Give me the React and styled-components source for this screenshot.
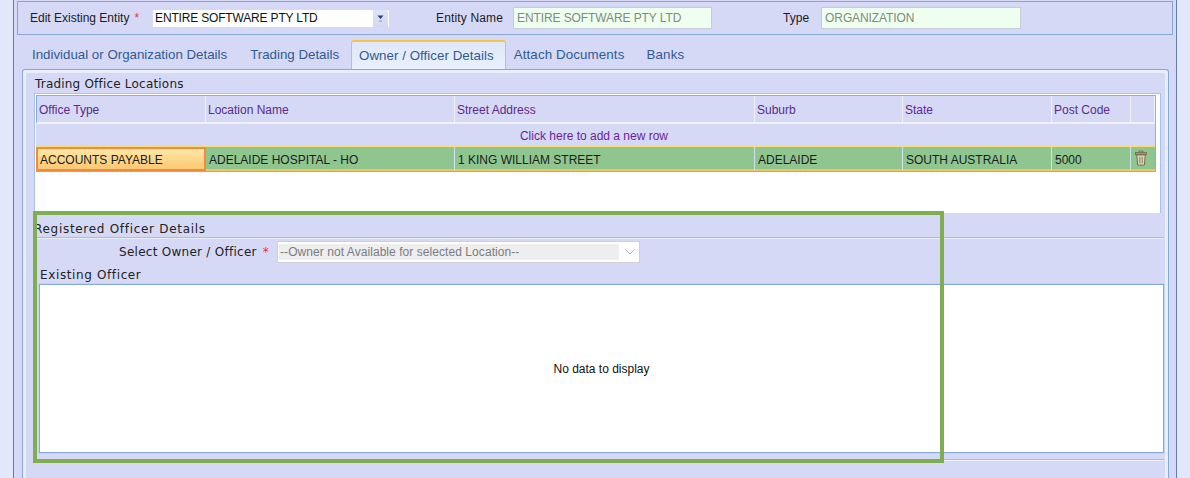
import React from "react";
import styled, { createGlobalStyle } from "styled-components";

const Global = createGlobalStyle`
  html, body { margin: 0; padding: 0; background: #e3e7fb; }
  body { width: 1190px; height: 478px; overflow: hidden; font-family: "Liberation Sans", Arial, sans-serif; }
`;

const Page = styled.div`
  position: relative;
  width: 1190px;
  height: 478px;
  overflow: hidden;
  padding: 0 13px;
  box-sizing: border-box;
`;
const Shell = styled.div`
  width: 1164px;
  height: 478px;
  box-sizing: border-box;
  background: #d6d9f6;
  border-left: 1px solid #5f7cac;
  border-right: 1px solid #5f7cac;
  padding: 1px 3px 0 3px;
`;
const TopPanel = styled.div`
  height: 34px;
  box-sizing: border-box;
  border: 1px solid #86a5d4;
  display: flex;
  align-items: center;
  padding-left: 12px;
  font-size: 12px;
  color: #1c1c1c;
`;
const FieldLabel = styled.label`
  margin-left: ${(p) => p.$ml || 0}px;
  white-space: nowrap;
  letter-spacing: ${(p) => p.$ls || 0}px;
`;
const Star = styled.span`
  color: #f03030;
  margin-left: 5px;
`;
const ComboBox = styled.div`
  margin-left: 14px;
  width: 236px;
  height: 17px;
  background: #fff;
  display: flex;
  align-items: center;
  padding-left: 2px;
  box-sizing: border-box;
  justify-content: space-between;
  color: #111;
  letter-spacing: -0.17px;
`;
const ComboArrow = styled.span`
  width: 16px;
  height: 17px;
  box-sizing: border-box;
  background: linear-gradient(#e2e5f8, #d2d7f1);
  border-right: 1px solid #fff;
  display: flex;
  align-items: center;
  justify-content: center;
`;
const ReadField = styled.div`
  margin-left: ${(p) => p.$ml}px;
  width: ${(p) => p.$w}px;
  height: 22px;
  box-sizing: border-box;
  border: 1px solid #c6ccd6;
  background: #efffef;
  color: #7f8a80;
  display: flex;
  align-items: center;
  padding-left: 3px;
  letter-spacing: -0.1px;
`;
const TabStrip = styled.div`
  height: 29px;
  margin-top: 5px;
  display: flex;
  padding-left: 5px;
  box-sizing: border-box;
`;
const Tab = styled.div`
  height: 29px;
  box-sizing: border-box;
  padding: 0 ${(p) => p.$pr}px 0 ${(p) => p.$pl}px;
  margin-left: ${(p) => p.$ml || 0}px;
  display: flex;
  align-items: center;
  font-size: 13.3px;
  letter-spacing: ${(p) => p.$ls || 0}px;
  color: #2f5a97;
  white-space: nowrap;
  ${(p) =>
    p.$active &&
    `background: linear-gradient(#dfe8f9, #e9f0fc);
     border: 1px solid #e8c050;
     border-top: 2px solid #f3c64a;
     border-bottom: none;
     border-radius: 3px 3px 0 0;`}
`;
const ContentPanel = styled.div`
  margin-left: 5px;
  width: 1147px;
  height: 420px;
  box-sizing: border-box;
  border: 1px solid #86a9dc;
  border-bottom: none;
  border-radius: 3px 3px 0 0;
  background: #d6d9f6;
  box-shadow: inset 0 0 0 3px #e8effb;
  padding: 4px 4px 0 3px;
  position: relative;
`;
const SectionTitle = styled.div`
  font-family: "DejaVu Sans", Verdana, sans-serif;
  font-size: 12px;
  color: #222;
  line-height: 14px;
  white-space: nowrap;
  letter-spacing: ${(p) => p.$ls || 0}px;
`;
const TradingTitle = styled(SectionTitle)`
  padding: 3px 0 0 9px;
  height: 19px;
  box-sizing: border-box;
`;
const GridFrame = styled.div`
  margin-left: 8px;
  width: 1127px;
  height: 120px;
  box-sizing: border-box;
  background: #fff;
  border: 1px solid #a6c3ec;
  border-bottom: none;
  padding: 1px 0 0 1px;
`;
const GridBox = styled.div`
  width: 1120px;
  border: 1px solid #8fb0dd;
  border-width: 1px 1px 1px 0;
  box-sizing: border-box;
  display: grid;
  grid-template-columns: 170px 249px 300px 148px 149px 79px 24px;
`;
const HeadCell = styled.div`
  height: 28px;
  background: #d6d9f6;
  color: #5b2a8a;
  font-size: 12px;
  display: flex;
  align-items: center;
  padding: 2px 0 0 2px;
  box-sizing: border-box;
  border-right: 1px solid #f0f3fd;
  border-bottom: 2px solid #f0f3fd;
  border-left: 1px solid #86a9dc;
  &:not(:first-child) { border-left: none; }
`;
const AddRow = styled.div`
  grid-column: 1 / -1;
  height: 23px;
  box-sizing: border-box;
  background: #d6d9f6;
  color: #6a1f9a;
  font-size: 12px;
  display: flex;
  align-items: center;
  justify-content: center;
  padding-right: 3px;
  padding-top: 3px;
  border-bottom: 2px solid #f5dc7e;
`;
const Cell = styled.div`
  height: 24px;
  box-sizing: border-box;
  background: #8fc690;
  color: #1b1b1b;
  font-size: 12px;
  display: flex;
  align-items: center;
  padding: 3px 0 0 3px;
  border-right: 1px solid #cfe0ee;
  border-bottom: 2px solid #f2c65c;
`;
const ActiveCell = styled(Cell)`
  background: linear-gradient(#ffe7a6, #fdc873);
  border: 2px solid #f58a3c;
  padding: 1px 0 0 2px;
`;
const IconCell = styled(Cell)`
  padding: 0 4px 0 0;
  justify-content: center;
  border-right: none;
`;
const Rule = styled.div`
  height: 1px;
  margin-left: 9px;
  background: #9fbde8;
  box-shadow: 0 1px 0 #e8effb;
`;
const RegTitle = styled(SectionTitle)`
  padding: 9px 0 0 8px;
  height: 24px;
  box-sizing: border-box;
`;
const SelectRow = styled.div`
  display: flex;
  align-items: center;
  height: 22px;
  margin-top: 3px;
  padding-left: 93px;
`;
const SelectStar = styled.span`
  color: #f03030;
  margin-left: 6px;
`;
const OwnerSelect = styled.div`
  margin-left: 8px;
  width: 363px;
  height: 22px;
  box-sizing: border-box;
  background: #fff;
  border: 1px solid #d0d0d4;
  display: flex;
  align-items: center;
  padding: 1px;
`;
const OwnerValue = styled.div`
  width: 340px;
  height: 16px;
  line-height: 16px;
  background: #eee;
  color: #7c7c80;
  font-size: 12px;
  letter-spacing: 0.06px;
  white-space: nowrap;
  overflow: hidden;
  padding-left: 1px;
  box-sizing: border-box;
`;
const Chevron = styled.span`
  margin-left: 5px;
  display: flex;
`;
const ExistingTitle = styled(SectionTitle)`
  padding: 5px 0 0 14px;
  height: 21px;
  box-sizing: border-box;
`;
const DataBox = styled.div`
  margin-left: 13px;
  width: 1125px;
  height: 169px;
  box-sizing: border-box;
  background: #fff;
  border: 1px solid #86a9dc;
  outline: 1px solid #c2d5f2;
  display: flex;
  align-items: center;
  justify-content: center;
  font-size: 12px;
  color: #111;
`;
const BottomRule = styled(Rule)`
  margin-top: 6px;
`;
const Highlight = styled.div`
  position: absolute;
  left: 33px;
  top: 211px;
  width: 911px;
  height: 252px;
  box-sizing: border-box;
  border: 4px solid #7fae50;
  pointer-events: none;
`;

const Trash = () => (
  <svg width="14" height="16" viewBox="0 0 14 16">
    <path d="M5 2.5 V1 H9 V2.5" fill="none" stroke="#7e6e50" strokeWidth="1" />
    <rect x="1.5" y="2.5" width="11" height="2.2" fill="#a3946f" stroke="#75684c" strokeWidth="0.8" />
    <path d="M2.8 5 H11.2 L10.4 15 H3.6 Z" fill="#ece8d8" stroke="#75684c" strokeWidth="1" />
    <path d="M5.3 6.5 V13.5 M7 6.5 V13.5 M8.7 6.5 V13.5" stroke="#938566" strokeWidth="1" />
  </svg>
);

const columns = ["Office Type", "Location Name", "Street Address", "Suburb", "State", "Post Code", ""];

export default function App() {
  return (
    <Page>
      <Global />
      <Shell>
        <TopPanel>
          <FieldLabel>
            Edit Existing Entity<Star>*</Star>
          </FieldLabel>
          <ComboBox>
            ENTIRE SOFTWARE PTY LTD
            <ComboArrow>
              <svg width="9" height="8" viewBox="0 0 9 8">
                <path d="M1.5 1.5 H7.5 L4.5 5 Z" fill="#27406e" />
                <path d="M3 7 H6" stroke="#8b9bbf" />
              </svg>
            </ComboArrow>
          </ComboBox>
          <FieldLabel $ml={47} $ls={0.15}>Entity Name</FieldLabel>
          <ReadField $ml={10} $w={199}>ENTIRE SOFTWARE PTY LTD</ReadField>
          <FieldLabel $ml={71}>Type</FieldLabel>
          <ReadField $ml={12} $w={200}>ORGANIZATION</ReadField>
        </TopPanel>
        <TabStrip>
          <Tab $pl={10} $pr={10}>Individual or Organization Details</Tab>
          <Tab $ml={3} $pl={10} $pr={10}>Trading Details</Tab>
          <Tab $active $ml={2} $pl={7} $pr={11} $ls={0.05}>Owner / Officer Details</Tab>
          <Tab $pl={8} $pr={11} $ls={0.13}>Attach Documents</Tab>
          <Tab $pl={11} $pr={11} $ls={0.2}>Banks</Tab>
        </TabStrip>
        <ContentPanel>
          <TradingTitle $ls={0.2}>Trading Office Locations</TradingTitle>
          <GridFrame>
            <GridBox>
              {columns.map((c, i) => (
                <HeadCell key={i}>{c}</HeadCell>
              ))}
              <AddRow>Click here to add a new row</AddRow>
              <ActiveCell>ACCOUNTS PAYABLE</ActiveCell>
              <Cell>ADELAIDE HOSPITAL - HO</Cell>
              <Cell>1 KING WILLIAM STREET</Cell>
              <Cell>ADELAIDE</Cell>
              <Cell>SOUTH AUSTRALIA</Cell>
              <Cell>5000</Cell>
              <IconCell><Trash /></IconCell>
            </GridBox>
          </GridFrame>
          <RegTitle $ls={0.7}>Registered Officer Details</RegTitle>
          <Rule />
          <SelectRow>
            <SectionTitle $ls={0.27}>
              Select Owner / Officer<SelectStar>*</SelectStar>
            </SectionTitle>
            <OwnerSelect>
              <OwnerValue>--Owner not Available for selected Location--</OwnerValue>
              <Chevron>
                <svg width="12" height="8" viewBox="0 0 12 8">
                  <path d="M1.5 1.5 L6 6 L10.5 1.5" fill="none" stroke="#b0b0b4" strokeWidth="1" />
                </svg>
              </Chevron>
            </OwnerSelect>
          </SelectRow>
          <ExistingTitle $ls={0.62}>Existing Officer</ExistingTitle>
          <DataBox>No data to display</DataBox>
          <BottomRule />
        </ContentPanel>
      </Shell>
      <Highlight />
    </Page>
  );
}
